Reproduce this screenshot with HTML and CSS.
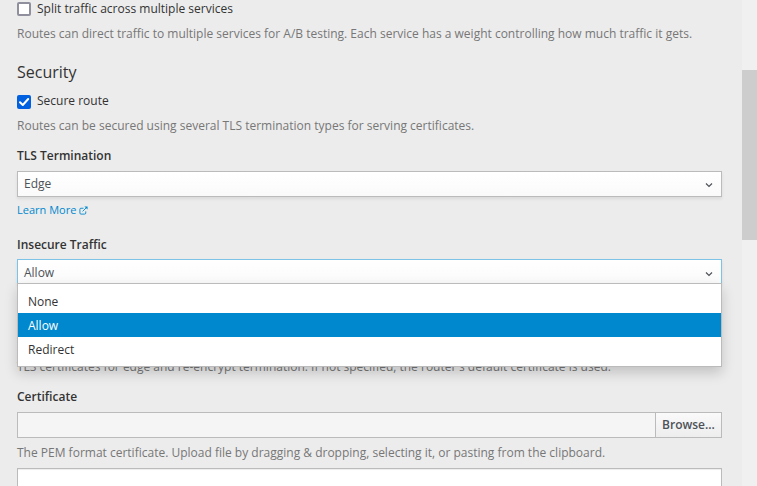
FILE: index.html
```html
<!DOCTYPE html>
<html lang="en">
<head><meta charset="utf-8"><title>Route</title><link rel="stylesheet" href="styles.css"></head>
<body>
<main class="form">
  <label class="check check-split"><span class="box"></span><span>Split traffic across multiple services</span></label>
  <p class="help help-split">Routes can direct traffic to multiple services for A/B testing. Each service has a weight controlling how much traffic it gets.</p>
  <h3 class="heading">Security</h3>
  <label class="check check-secure"><span class="box checked"><svg viewBox="0 0 14 14"><path d="M3 7.2 5.8 10 11.2 4"/></svg></span><span>Secure route</span></label>
  <p class="help help-secure">Routes can be secured using several TLS termination types for serving certificates.</p>
  <div class="label label-tls">TLS Termination</div>
  <div class="select"><span>Edge</span><svg class="chev" viewBox="0 0 8 6"><path d="M1 1.5 4 4.5 7 1.5"/></svg></div>
  <a class="learn">Learn More <svg viewBox="0 0 10 10"><path d="M5 2.5H2.2Q1 2.5 1 3.5V7.8Q1 9 2.2 9H6.3Q7.5 9 7.5 7.8V6M4 6 8.5 1.5"/><path class="tip" d="M6 .5H9.5V4Z"/></svg></a>
  <div class="label label-insecure">Insecure Traffic</div>
  <div class="dropdown">
    <div class="select open"><span>Allow</span><svg class="chev" viewBox="0 0 8 6"><path d="M1 1.5 4 4.5 7 1.5"/></svg></div>
    <ul class="menu"><li>None</li><li class="active">Allow</li><li>Redirect</li></ul>
  </div>
  <p class="help help-tls">TLS certificates for edge and re-encrypt termination. If not specified, the router's default certificate is used.</p>
  <div class="label label-cert">Certificate</div>
  <div class="file"><span class="file-name"></span><span class="browse">Browse...</span></div>
  <p class="help help-cert">The PEM format certificate. Upload file by dragging &amp; dropping, selecting it, or pasting from the clipboard.</p>
  <div class="textarea"></div>
</main>
<div class="scroll"><div class="thumb"></div></div>
</body>
</html>
```

FILE: styles.css
```css
* { box-sizing: border-box; }
body { margin: 0; height: 486px; overflow: hidden; display: flex; background: #ececec; color: #333; font: 12px/20px "Open Sans", sans-serif; }
.form { width: 742px; padding: 0 20px 0 17px; }
.check { display: flex; gap: 6px; height: 20px; font-size: 12px; }
.check-split { margin-top: -1px; }
.box { width: 14px; height: 14px; margin-top: 4px; border: 2px solid #8f8f9d; border-radius: 2px; background: #fff; }
.check-split .box { margin-top: 3px; }
.checked { background: #0060df; border: 0; }
.checked svg { display: block; width: 14px; height: 14px; fill: none; stroke: #fff; stroke-width: 2; stroke-linecap: round; stroke-linejoin: round; }
.help { margin: 0; height: 20px; color: #777; white-space: nowrap; }
.help-split { margin-top: 5px; }
.heading { margin: 17px 0 0; font-size: 16px; font-weight: 400; line-height: 22px; }
.check-secure { margin-top: 8px; }
.help-secure { margin-top: 5px; }
.label { height: 20px; font-weight: 600; }
.label-tls { margin-top: 10px; }
.select { display: flex; align-items: center; justify-content: space-between; height: 26px; margin-top: 5px; padding: 0 8px 0 6px; border: 1px solid #bbb; background: linear-gradient(#fff, #fafafa); box-shadow: 0 2px 3px rgba(0,0,0,.08); color: #4d5258; }
.chev { width: 8px; height: 6px; margin-top: 1px; fill: none; stroke: #4d5258; stroke-width: 1.2; }
.learn { display: flex; align-items: center; gap: 3px; height: 20px; margin-top: 3px; font-size: 11px; color: #0088ce; }
.learn svg { width: 9px; height: 9px; fill: none; stroke: currentColor; stroke-width: 1; }
.learn .tip { fill: currentColor; stroke: none; }
.label-insecure { margin-top: 15px; }
.dropdown { position: relative; }
.open { margin-top: 4px; padding-top: 2px; border-color: #7dc3e8; }
.menu { position: absolute; top: 24px; left: 0; right: 0; height: 84px; margin: 0; padding: 5px 0; list-style: none; border: 1px solid #bbb; background: #fff; box-shadow: 0 6px 12px rgba(0,0,0,.175); }
.menu li { height: 24px; padding: 1px 10px 0; line-height: 24px; }
.menu .active { color: #fff; background: #0088ce; }
.help-tls { margin-top: 72px; }
.label-cert { margin-top: 10px; }
.file { display: flex; height: 26px; margin-top: 5px; border: 1px solid #bbb; }
.file-name { flex: 1; background: #f5f5f5; }
.browse { width: 66px; border-left: 1px solid #bbb; background: linear-gradient(#fafafa, #ededed); text-align: center; font-weight: 600; line-height: 24px; color: #4d5258; }
.help-cert { margin-top: 5px; }
.textarea { height: 40px; margin-top: 5px; border: 1px solid #bbb; background: #fff; box-shadow: inset 0 1px 1px rgba(0,0,0,.075); }
.scroll { width: 15px; padding-top: 70px; background: #f0f0f0; }
.thumb { height: 170px; background: #cdcdcd; }
```
